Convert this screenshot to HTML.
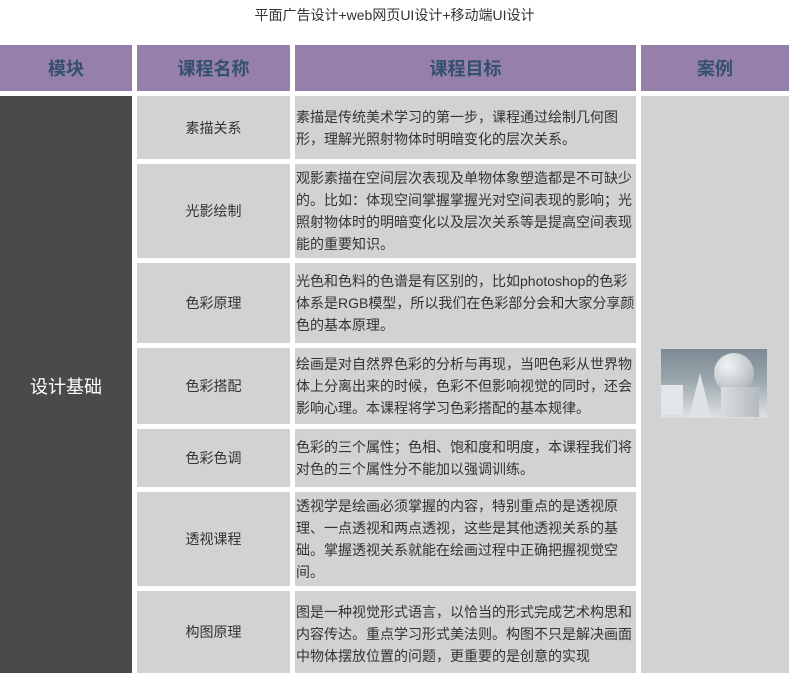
<!DOCTYPE html>
<html><head><meta charset="utf-8"><style>
*{margin:0;padding:0;box-sizing:border-box}
body{width:789px;height:673px;overflow:hidden;background:#fff;font-family:"Liberation Sans","Noto Sans CJK SC",sans-serif;position:relative;color:#333}
.a{position:absolute}
.t{left:0;width:789px;top:5px;text-align:center;font-size:14px;color:#333}
.h{background:#967fa9;color:#34506f;font-weight:bold;font-size:18px;display:flex;align-items:center;justify-content:center;top:45px;height:46px}
.c{background:#d2d2d2;font-size:14px}
.n{left:137px;width:153px;display:flex;align-items:center;justify-content:center}
.d{left:295px;width:341px;padding:0 2px 0 1px;display:flex;align-items:center;line-height:22px}
</style></head><body>
<div class="a t">平面广告设计+web网页UI设计+移动端UI设计</div>
<div class="a h" style="left:0;width:132px">模块</div>
<div class="a h" style="left:137px;width:153px">课程名称</div>
<div class="a h" style="left:295px;width:341px">课程目标</div>
<div class="a h" style="left:641px;width:148px">案例</div>
<div class="a" style="left:0;top:96px;width:132px;height:577px;background:#4a4a4a;color:#fff;font-size:18px;display:flex;align-items:center;justify-content:center;padding-top:2px">设计基础</div>
<div class="a c" style="left:641px;top:96px;width:148px;height:577px"></div>
<div class="a" style="left:661px;top:349px;width:106px;height:69px;background:linear-gradient(180deg,#7d8a93 0%,#9aa6ad 45%,#c6ccd0 80%,#dfe2e3 100%);overflow:hidden">
<div class="a" style="left:53px;top:4px;width:40px;height:40px;border-radius:50%;background:radial-gradient(circle at 35% 30%,#f2f4f5,#b7bfc4 70%,#8e989e)"></div>
<div class="a" style="left:60px;top:38px;width:38px;height:30px;background:linear-gradient(90deg,#d9dde0,#b3bbc0)"></div>
<div class="a" style="left:28px;top:24px;width:0;height:0;border-left:11px solid transparent;border-right:11px solid transparent;border-bottom:44px solid #dfe3e5"></div>
<div class="a" style="left:0;top:36px;width:22px;height:30px;background:#e3e6e8"></div>
</div>
<div class="a c n" style="top:96px;height:63px">素描关系</div>
<div class="a c d" style="top:96px;height:63px">素描是传统美术学习的第一步，课程通过绘制几何图形，理解光照射物体时明暗变化的层次关系。</div>
<div class="a c n" style="top:164px;height:94px">光影绘制</div>
<div class="a c d" style="top:164px;height:94px">观影素描在空间层次表现及单物体象塑造都是不可缺少的。比如：体现空间掌握掌握光对空间表现的影响；光照射物体时的明暗变化以及层次关系等是提高空间表现能的重要知识。</div>
<div class="a c n" style="top:263px;height:80px">色彩原理</div>
<div class="a c d" style="top:263px;height:80px;white-space:nowrap"><span>光色和色料的色谱是有区别的，比如photoshop的色彩<br>体系是RGB模型，所以我们在色彩部分会和大家分享颜<br>色的基本原理。</span></div>
<div class="a c n" style="top:348px;height:76px">色彩搭配</div>
<div class="a c d" style="top:348px;height:76px">绘画是对自然界色彩的分析与再现，当吧色彩从世界物体上分离出来的时候，色彩不但影响视觉的同时，还会影响心理。本课程将学习色彩搭配的基本规律。</div>
<div class="a c n" style="top:429px;height:58px">色彩色调</div>
<div class="a c d" style="top:429px;height:58px">色彩的三个属性；色相、饱和度和明度，本课程我们将对色的三个属性分不能加以强调训练。</div>
<div class="a c n" style="top:492px;height:94px">透视课程</div>
<div class="a c d" style="top:492px;height:94px">透视学是绘画必须掌握的内容，特别重点的是透视原理、一点透视和两点透视，这些是其他透视关系的基础。掌握透视关系就能在绘画过程中正确把握视觉空间。</div>
<div class="a c n" style="top:591px;height:82px">构图原理</div>
<div class="a c d" style="top:591px;height:82px;align-items:flex-start;padding-top:10px">图是一种视觉形式语言，以恰当的形式完成艺术构思和内容传达。重点学习形式美法则。构图不只是解决画面中物体摆放位置的问题，更重要的是创意的实现</div>
</body></html>
